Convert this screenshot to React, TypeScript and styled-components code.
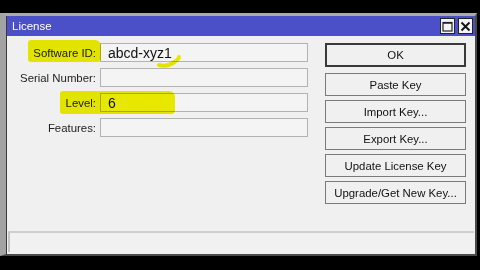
import React from "react";
import styled, { createGlobalStyle } from "styled-components";

const Global = createGlobalStyle`
  html, body {
    margin: 0;
    padding: 0;
    background: #000;
    width: 480px;
    height: 270px;
    overflow: hidden;
  }
`;

const S = {
  Frame: styled.div`
    margin-top: 13px;
    width: 469px;
    height: 238px;
    border-left: 6px solid #a3a3a3;
    border-top: 3px solid #a9a9a9;
    border-right: 2px solid #4a4a4a;
    border-bottom: 2px solid #4a4a4a;
    background: #f0f0f0;
    display: flex;
    flex-direction: column;
    box-shadow: inset 1px 0 0 #3a3a3a;
    font-family: "Liberation Sans", Arial, sans-serif;
  `,
  TitleBar: styled.div`
    height: 20px;
    margin-left: 1px;
    background: #4b50c8;
    display: flex;
    align-items: center;
    justify-content: space-between;
    padding: 0 2px 0 5px;
  `,
  Title: styled.span`
    color: #fff;
    font-size: 11.5px;
  `,
  TitleBtns: styled.div`
    display: flex;
    gap: 3px;
  `,
  TitleBtn: styled.div`
    width: 13px;
    height: 14px;
    background: #f4f4f4;
    border: 1px solid #222;
    display: flex;
    align-items: center;
    justify-content: center;
  `,
  Content: styled.div`
    flex: 1;
    display: flex;
    padding: 7px 0 0 1px;
    position: relative;
  `,
  Form: styled.div`
    width: 301px;
    display: flex;
    flex-direction: column;
    gap: 6px;
  `,
  Row: styled.div`
    display: flex;
    align-items: center;
    height: 19px;
    gap: 4px;
  `,
  Label: styled.label`
    width: 89px;
    text-align: right;
    font-size: 11.4px;
    color: #222;
    position: relative;
    z-index: 1;
  `,
  Field: styled.div<{ $big?: boolean }>`
    width: 208px;
    height: 19px;
    box-sizing: border-box;
    border: 1px solid #b2b2b2;
    background: #f4f4f4;
    font-size: ${(p) => (p.$big ? "14px" : "12px")};
    color: #111;
    display: flex;
    align-items: center;
    padding-left: 7px;
    position: relative;
    z-index: 1;
  `,
  Buttons: styled.div`
    margin-left: 17px;
    width: 141px;
    display: flex;
    flex-direction: column;
    gap: 4px;
  `,
  Button: styled.button<{ $default?: boolean }>`
    height: ${(p) => (p.$default ? "24px" : "23px")};
    margin-bottom: ${(p) => (p.$default ? "2px" : "0")};
    border: ${(p) => (p.$default ? "2px solid #3a3a3a" : "1px solid #7a7a7a")};
    background: #f0f0f0;
    font-family: "Liberation Sans", Arial, sans-serif;
    font-size: 11.4px;
    color: #111;
    padding: 0;
  `,
  Highlight: styled.div`
    position: absolute;
    background: #f2f200;
    mix-blend-mode: multiply;
    border-radius: 3px 6px 4px 3px;
    z-index: 2;
    pointer-events: none;
  `,
  Squiggle: styled.svg`
    position: absolute;
    left: 151px;
    top: 19px;
    mix-blend-mode: multiply;
    z-index: 2;
  `,
  StatusBar: styled.div`
    height: 19px;
    margin: 0 1px 2px 2px;
    border-top: 2px solid #cfcfcf;
    border-left: 2px solid #c4c4c4;
    background: #f1f1f1;
  `,
};

const fields = [
  { label: "Software ID:", value: "abcd-xyz1", big: true },
  { label: "Serial Number:", value: "" },
  { label: "Level:", value: "6", big: true },
  { label: "Features:", value: "" },
];

const buttons = [
  "Paste Key",
  "Import Key...",
  "Export Key...",
  "Update License Key",
  "Upgrade/Get New Key...",
];

const App = () => {
  return (
    <>
      <Global />
      <S.Frame>
        <S.TitleBar>
          <S.Title>License</S.Title>
          <S.TitleBtns>
            <S.TitleBtn>
              <svg width="11" height="11" viewBox="0 0 11 11">
                <rect x="1" y="1.5" width="9" height="8.5" fill="none" stroke="#222" strokeWidth="1.2" />
                <line x1="1" y1="2" x2="10" y2="2" stroke="#222" strokeWidth="1.5" />
              </svg>
            </S.TitleBtn>
            <S.TitleBtn>
              <svg width="11" height="11" viewBox="0 0 11 11">
                <path d="M1.5 1.5 L9.5 9.5 M9.5 1.5 L1.5 9.5" stroke="#111" strokeWidth="1.8" />
              </svg>
            </S.TitleBtn>
          </S.TitleBtns>
        </S.TitleBar>
        <S.Content>
          <S.Form>
            {fields.map((f) => (
              <S.Row key={f.label}>
                <S.Label>{f.label}</S.Label>
                <S.Field $big={f.big}>{f.value}</S.Field>
              </S.Row>
            ))}
          </S.Form>
          <S.Buttons>
            <S.Button $default>OK</S.Button>
            {buttons.map((b) => (
              <S.Button key={b}>{b}</S.Button>
            ))}
          </S.Buttons>
          <S.Highlight style={{ left: 22, top: 4, width: 73, height: 22 }} />
          <S.Squiggle width="24" height="14" viewBox="0 0 24 14">
            <path d="M2 10 Q10 12 16 8 T22 2" fill="none" stroke="#f2f200" strokeWidth="4" strokeLinecap="round" />
          </S.Squiggle>
          <S.Highlight style={{ left: 54, top: 55, width: 115, height: 23 }} />
        </S.Content>
        <S.StatusBar />
      </S.Frame>
    </>
  );
};

export default App;
